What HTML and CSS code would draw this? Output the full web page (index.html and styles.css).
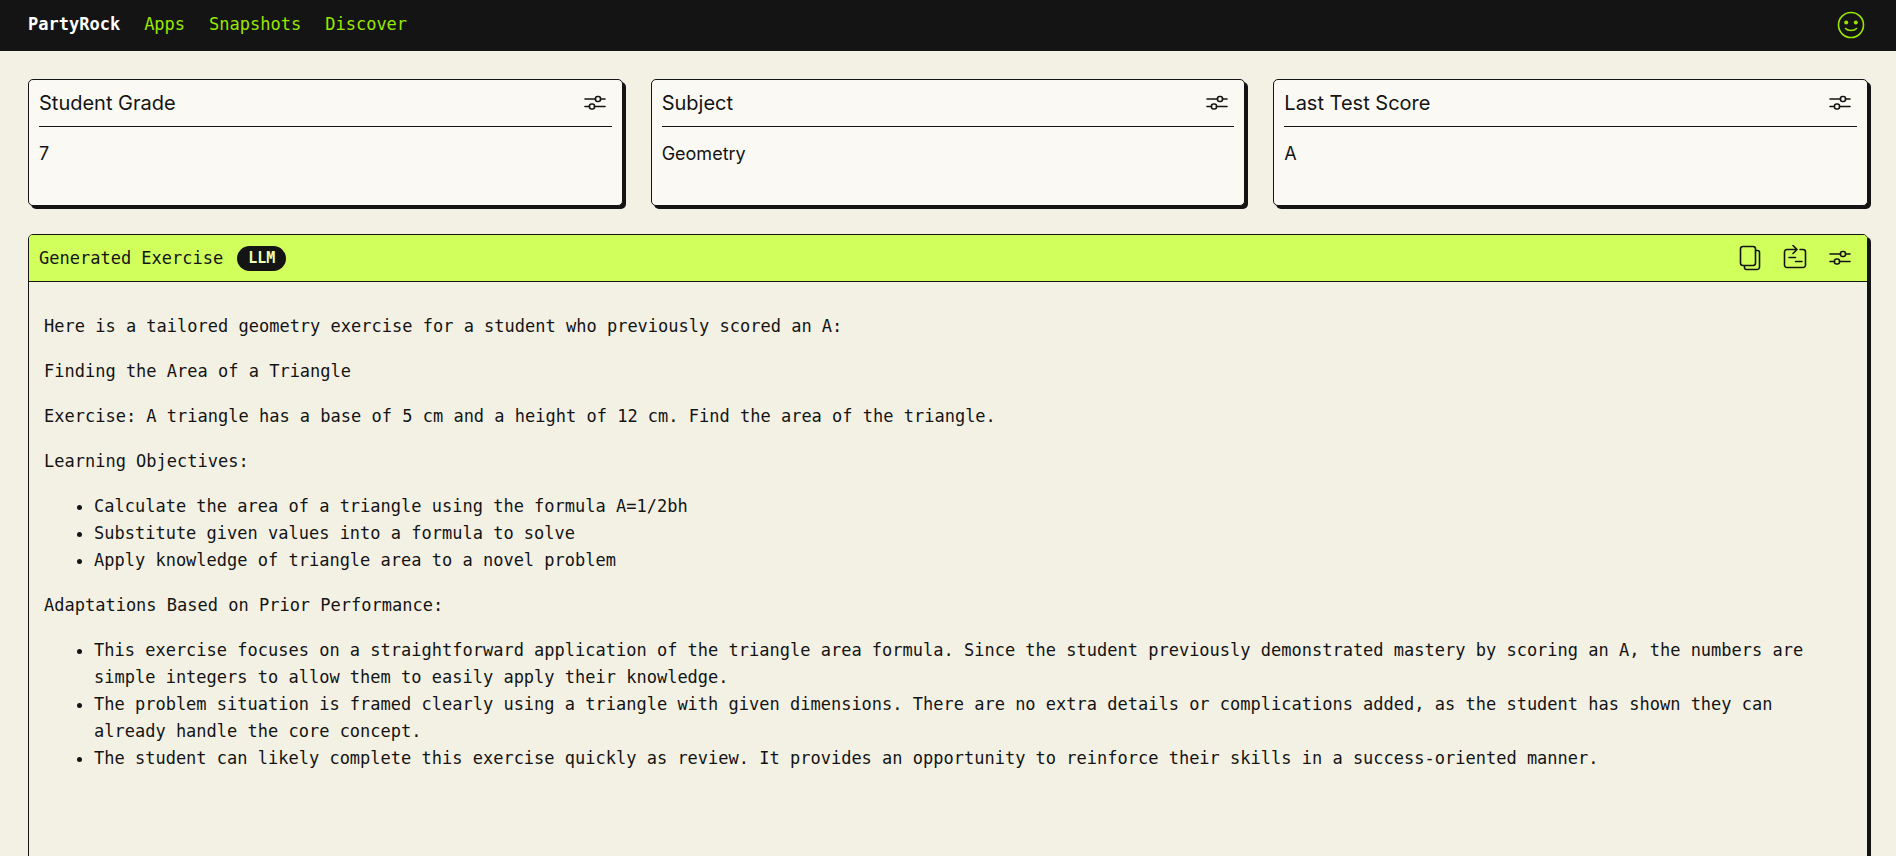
FILE: index.html
```html
<!DOCTYPE html>
<html lang="en">
<head>
<meta charset="utf-8">
<title>PartyRock</title>
<link rel="stylesheet" href="styles.css">
</head>
<body>
<svg class="sprite" aria-hidden="true">
  <symbol id="sliders" viewBox="0 0 24 24">
    <path d="M2 8h10.500M17.500 8h4.500M2 15.500h4M11.500 15.500h10.500"/>
    <rect x="12.500" y="5.500" width="5" height="5" rx="2"/>
    <rect x="6.500" y="13" width="5" height="5" rx="2"/>
  </symbol>
</svg>
<header class="topbar">
  <nav class="nav">
    <a class="brand" href="#">PartyRock</a>
    <a class="nav-link" href="#">Apps</a>
    <a class="nav-link" href="#">Snapshots</a>
    <a class="nav-link" href="#">Discover</a>
  </nav>
  <button class="icon-button account" type="button" aria-label="Account">
    <svg class="icon icon-large" viewBox="0 0 28 28"><circle cx="14" cy="14" r="12.500"/><path d="M8.500 17.500c2.500 2.700 8.500 2.700 11 0"/><circle class="eye" cx="9.200" cy="11.400" r="2"/><circle class="eye" cx="18.800" cy="11.400" r="2"/></svg>
  </button>
</header>
<main class="page">
  <div class="cards">
    <section class="card">
      <header class="card-header"><h2 class="card-title">Student Grade</h2><button class="icon-button" type="button" aria-label="Edit Student Grade"><svg class="icon"><use href="#sliders"/></svg></button></header>
      <p class="card-value">7</p>
    </section>
    <section class="card">
      <header class="card-header"><h2 class="card-title">Subject</h2><button class="icon-button" type="button" aria-label="Edit Subject"><svg class="icon"><use href="#sliders"/></svg></button></header>
      <p class="card-value">Geometry</p>
    </section>
    <section class="card">
      <header class="card-header"><h2 class="card-title">Last Test Score</h2><button class="icon-button" type="button" aria-label="Edit Last Test Score"><svg class="icon"><use href="#sliders"/></svg></button></header>
      <p class="card-value">A</p>
    </section>
  </div>
  <section class="panel">
    <header class="panel-header">
      <h2 class="panel-title">Generated Exercise</h2>
      <span class="badge">LLM</span>
      <div class="actions">
        <button class="icon-button" type="button" aria-label="Copy"><svg class="icon icon-large" viewBox="0 0 28 28"><rect x="4.500" y="2.500" width="15" height="19" rx="2.500"/><path d="M20 6.500h1.500a2 2 0 0 1 2 2V23a2.500 2.500 0 0 1-2.500 2.500H10.500a2 2 0 0 1-2-2V22"/></svg></button>
        <button class="icon-button" type="button" aria-label="Insert output"><svg class="icon icon-large" viewBox="0 0 28 28"><path d="M15.500 5.500H6A2.500 2.500 0 0 0 3.500 8v13A2.500 2.500 0 0 0 6 23.500h16a2.500 2.500 0 0 0 2.500-2.500V8A2.500 2.500 0 0 0 22 5.500h-3M12 1.500l4 4-4 4M8 13.500h6.500M14.500 17.500H21"/></svg></button>
        <button class="icon-button" type="button" aria-label="Edit Generated Exercise"><svg class="icon"><use href="#sliders"/></svg></button>
      </div>
    </header>
    <div class="output">
      <p>Here is a tailored geometry exercise for a student who previously scored an A:</p>
      <p>Finding the Area of a Triangle</p>
      <p>Exercise: A triangle has a base of 5 cm and a height of 12 cm. Find the area of the triangle.</p>
      <p>Learning Objectives:</p>
      <ul>
        <li>Calculate the area of a triangle using the formula A=1/2bh</li>
        <li>Substitute given values into a formula to solve</li>
        <li>Apply knowledge of triangle area to a novel problem</li>
      </ul>
      <p>Adaptations Based on Prior Performance:</p>
      <ul>
        <li>This exercise focuses on a straightforward application of the triangle area formula. Since the student previously demonstrated mastery by scoring an A, the numbers are simple integers to allow them to easily apply their knowledge.</li>
        <li>The problem situation is framed clearly using a triangle with given dimensions. There are no extra details or complications added, as the student has shown they can already handle the core concept.</li>
        <li>The student can likely complete this exercise quickly as review. It provides an opportunity to reinforce their skills in a success-oriented manner.</li>
      </ul>
    </div>
  </section>
</main>
</body>
</html>
```
FILE: styles.css
```css
:root {
  --ink: #141414;
  --paper: #f3f0e4;
  --card: #faf9f3;
  --lime: #d1ff5c;
  --link: #99e600;
  --mono: "DejaVu Sans Mono", "Liberation Mono", monospace;
  --sans: Inter, "Liberation Sans", sans-serif;
}

* { box-sizing: border-box; }

body {
  margin: 0;
  background: var(--paper);
  color: var(--ink);
  font: 17px/27px var(--mono);
}

h2, p, ul { margin: 0; }

.sprite { display: none; }

.topbar {
  display: flex;
  align-items: center;
  justify-content: space-between;
  padding: 8px 28px 9px;
  background: var(--ink);
}

.nav { display: flex; gap: 24px; padding-bottom: 2px; }
.nav a { text-decoration: none; }
.brand { color: #fff; font-weight: 700; }
.nav-link { color: var(--link); }

.icon-button {
  display: flex;
  align-items: center;
  justify-content: center;
  width: 34px;
  height: 34px;
  padding: 0;
  border: 0;
  background: none;
  color: inherit;
  cursor: pointer;
}

.icon {
  width: 24px;
  height: 24px;
  fill: none;
  stroke: currentColor;
  stroke-width: 1.6;
  stroke-linecap: round;
  stroke-linejoin: round;
}

.icon-large { width: 28px; height: 28px; }
.account { color: var(--link); }
.eye { fill: currentColor; stroke: none; }

.page {
  display: flex;
  flex-direction: column;
  gap: 28px;
  padding: 28px;
}

.cards {
  display: grid;
  grid-template-columns: repeat(3, minmax(0, 1fr));
  gap: 28px;
}

.card, .panel {
  border: 1px solid var(--ink);
  border-radius: 5px;
  box-shadow: 3px 3px 0 var(--ink);
}

.card {
  min-height: 127px;
  padding: 0 10px;
  background: var(--card);
  font-family: var(--sans);
}

.card-header {
  display: flex;
  align-items: center;
  justify-content: space-between;
  height: 47px;
  border-bottom: 1px solid var(--ink);
}

.card-title { font-size: 20px; font-weight: 400; }
.card-value { padding-top: 13px; font-size: 18px; }

.panel { min-height: 700px; }

.panel-header {
  display: flex;
  align-items: center;
  gap: 14px;
  height: 47px;
  padding: 0 10px;
  border-bottom: 1px solid var(--ink);
  border-radius: 4px 4px 0 0;
  background: var(--lime);
}

.panel-title { font-size: 17px; font-weight: 400; }

.badge {
  padding: 0 11px;
  border-radius: 13px;
  background: var(--ink);
  color: #eaffb0;
  font-size: 15px;
  font-weight: 700;
  line-height: 25px;
}

.actions { display: flex; gap: 11px; margin-left: auto; }

.output {
  display: flex;
  flex-direction: column;
  gap: 18px;
  padding: 31px 15px;
}

.output ul { padding-left: 50px; }
```
